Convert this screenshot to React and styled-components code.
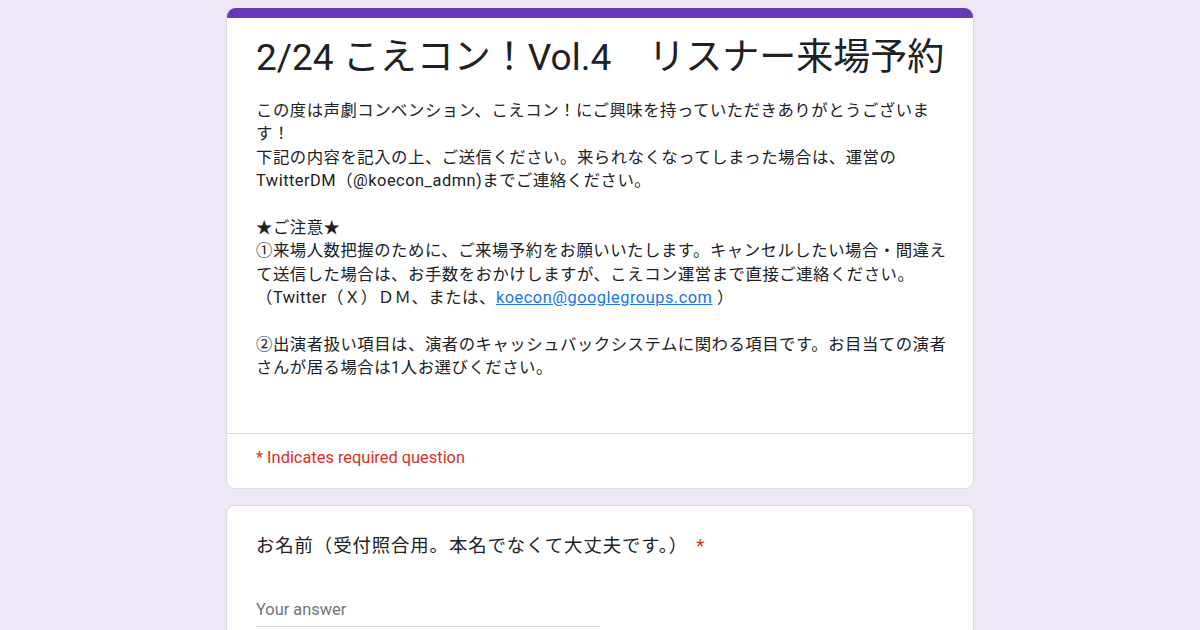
import React from 'react';
import styled, { createGlobalStyle } from 'styled-components';

const GlobalStyle = createGlobalStyle`
  html, body {
    margin: 0;
    padding: 0;
    background: #ede7f6;
  }
  body {
    font-family: Roboto, 'Noto Sans CJK JP', sans-serif;
    color: #202124;
  }
`;

const StyledPage = styled.main`
  width: 748px;
  margin: 0 auto;
  padding-top: 8px;
  display: flex;
  flex-direction: column;
  gap: 16px;
`;

const StyledCard = styled.section`
  background: #fff;
  border: 1px solid #dadce0;
  border-radius: 9px;
  overflow: hidden;
  ${({ $accent }) => $accent && `border-top: 0;`}
`;

const StyledAccent = styled.div`
  height: 10px;
  background: #673ab7;
`;

const StyledHeader = styled.div`
  padding: 17px 24px 53px 29px;
`;

const StyledTitle = styled.h1`
  margin: 0 0 18px;
  font-family: Roboto, 'Noto Sans CJK JP', sans-serif;
  font-size: 37px;
  font-weight: 400;
  line-height: 46px;
  color: #202124;
  white-space: nowrap;
`;

const StyledDescription = styled.div`
  font-size: 16.4px;
  letter-spacing: 0.5px;
  line-height: 23.4px;
  white-space: pre;

  a {
    color: #1a73e8;
    text-decoration: underline;
  }
`;

const StyledRequired = styled.div`
  border-top: 1px solid #dadce0;
  padding: 14px 24px 20px 29px;
  font-size: 16.4px;
  line-height: 20px;
  color: #d93025;
`;

const StyledQuestion = styled.div`
  padding: 26px 24px 60px 29px;
`;

const StyledLabel = styled.div`
  font-size: 18.4px;
  line-height: 28px;
  letter-spacing: 0.9px;
  color: #202124;

  span {
    color: #d93025;
    padding-left: 0.45em;
  }
`;

const StyledField = styled.div`
  margin-top: 40px;
  width: 344px;
  padding-bottom: 6px;
  border-bottom: 1px solid #dadce0;
  font-size: 16.4px;
  line-height: 20px;
  color: #70757a;
`;

const App = () => (
  <>
    <GlobalStyle />
    <StyledPage>
      <StyledCard $accent>
        <StyledAccent />
        <StyledHeader>
          <StyledTitle>2/24 こえコン！Vol.4　リスナー来場予約</StyledTitle>
          <StyledDescription>
            {'この度は声劇コンベンション、こえコン！にご興味を持っていただきありがとうございま\nす！\n下記の内容を記入の上、ご送信ください。来られなくなってしまった場合は、運営の\nTwitterDM（@koecon_admn)までご連絡ください。\n\n★ご注意★\n①来場人数把握のために、ご来場予約をお願いいたします。キャンセルしたい場合・間違え\nて送信した場合は、お手数をおかけしますが、こえコン運営まで直接ご連絡ください。\n（Twitter（Ｘ）ＤＭ、または、'}
            <a href="#mail">koecon@googlegroups.com</a>
            {' ）\n\n②出演者扱い項目は、演者のキャッシュバックシステムに関わる項目です。お目当ての演者\nさんが居る場合は1人お選びください。'}
          </StyledDescription>
        </StyledHeader>
        <StyledRequired>* Indicates required question</StyledRequired>
      </StyledCard>

      <StyledCard>
        <StyledQuestion>
          <StyledLabel>
            お名前（受付照合用。本名でなくて大丈夫です。）<span>*</span>
          </StyledLabel>
          <StyledField>Your answer</StyledField>
        </StyledQuestion>
      </StyledCard>
    </StyledPage>
  </>
);

export default App;
